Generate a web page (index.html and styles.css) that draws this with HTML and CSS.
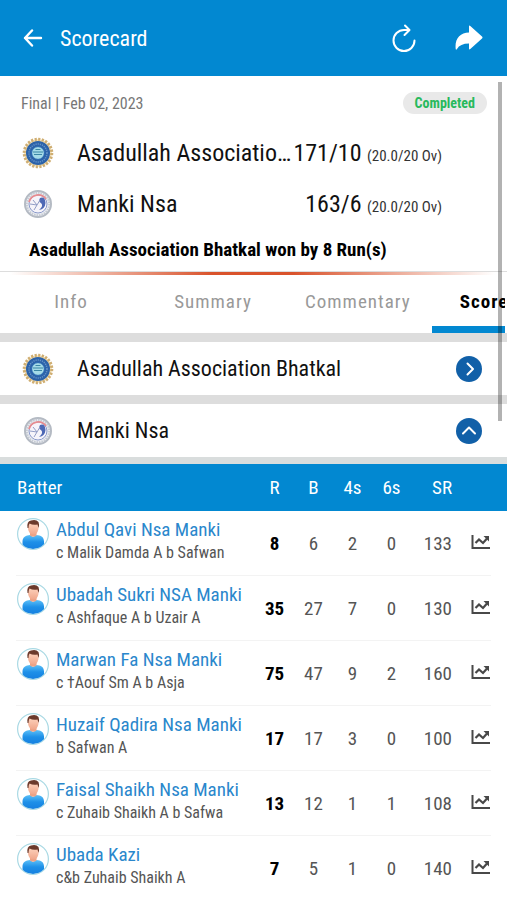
FILE: index.html
```
<!DOCTYPE html>
<html lang="en">

<head>
  <meta charset="utf-8">
  <meta name="viewport" content="width=device-width, initial-scale=1">
  <title>Scorecard</title>
  <link rel="stylesheet" href="styles.css">
</head>

<body>

  <!-- shared icons -->
  <svg class="sprite" aria-hidden="true">
    <defs>
      <linearGradient id="shirt" x1="0" y1="0" x2="0" y2="1">
        <stop offset="0" stop-color="#5cc0f8"></stop>
        <stop offset="0.5" stop-color="#1e90e8"></stop>
        <stop offset="1" stop-color="#1580e0"></stop>
      </linearGradient>
      <linearGradient id="skin" x1="0" y1="0" x2="0" y2="1">
        <stop offset="0" stop-color="#ffd9c4"></stop>
        <stop offset="1" stop-color="#f0a68a"></stop>
      </linearGradient>
      <clipPath id="round"><circle cx="16" cy="16" r="15"></circle></clipPath>
    </defs>
    <symbol id="player" viewBox="0 0 32 32">
      <circle cx="16" cy="16" r="15.400" fill="#fff" stroke="#a9d9e4" stroke-width="1.200"></circle>
      <g clip-path="url(#round)">
        <path d="M5.500 29V23.500C5.500 19 9 17.500 13 17L16 19L19.500 17C24 17.500 27 19 27 23.500V29Q16 33 5.500 29Z" fill="url(#shirt)"></path>
        <path d="M13 14H19.500V17.500Q16 20 13 17.500Z" fill="#eba285"></path>
        <path d="M11 7Q11 3 16.500 3Q21.500 3 21.500 7V11Q20.500 16.500 16.500 16.500Q12 16.500 11 11Z" fill="url(#skin)"></path>
        <path d="M10.500 10Q9.500 3 14 2.500Q19 1 21.500 4Q22.500 6 21.500 10L20.500 6.500Q16 7.500 12.500 5.500Q11.500 7 11.500 10Z" fill="#6b3a2c"></path>
      </g>
    </symbol>
    <symbol id="graph" viewBox="0 0 20 16">
      <path d="M1.500 1V14H19" fill="none" stroke="#484848" stroke-width="2"></path>
      <path d="M4.500 9L8 5.500L12 9L16 4.500" fill="none" stroke="#484848" stroke-width="2.200"></path>
      <path d="M12.500 2H18V7.500Z" fill="#484848"></path>
    </symbol>
    <symbol id="logo-asadullah" viewBox="0 0 32 32">
      <circle cx="16" cy="16" r="13.800" fill="#f2dfb4" stroke="#cfae72" stroke-width="3" stroke-dasharray="2.200 1.400"></circle>
      <circle cx="16" cy="16" r="12" fill="#2c62a8"></circle>
      <circle cx="16" cy="16" r="9" fill="none" stroke="#6695cb" stroke-width="1.500" stroke-dasharray="1.200 1"></circle>
      <circle cx="16" cy="16" r="6.400" fill="#a5dbe8" stroke="#2666b0"></circle>
      <path d="M11 15H21M12 17.500H20M13.500 12.500H18.500" stroke="#3b87a5"></path>
    </symbol>
    <symbol id="logo-manki" viewBox="0 0 32 32">
      <circle cx="16" cy="16" r="13" fill="#eceef2" stroke="#b4bac3" stroke-width="2"></circle>
      <circle cx="16" cy="16" r="11.200" fill="none" stroke="#c5cad3" stroke-width="2" stroke-dasharray="1.500 1"></circle>
      <circle cx="16" cy="16" r="9" fill="#f6f4fa" stroke="#8998ca"></circle>
      <path d="M7 14A9.500 9.500 0 0 1 24 11" fill="none" stroke="#e78c90" stroke-width="1.800"></path>
      <path d="M18 10Q23 8 23.500 15Q23 21 17 22Q22 18 19 15Q16 14 18 10Z" fill="#4d68b5"></path>
      <path d="M8 16L15 17L11 12M15 17L12 22M15 17L18 12" fill="none" stroke="#929dc6"></path>
    </symbol>
  </svg>

  <header class="topbar">
    <button class="icon-btn" type="button" aria-label="Back">
      <svg width="20" height="18" viewBox="0 0 20 18" fill="none" stroke="#fff" stroke-width="2.400" stroke-linecap="round" stroke-linejoin="round">
        <path d="M18 9H2M9 1.500L2 9L9 16.500"></path>
      </svg>
    </button>
    <h1>Scorecard</h1>
    <button class="icon-btn" type="button" aria-label="Refresh">
      <svg width="24" height="28" viewBox="0 0 24 28" fill="none" stroke="#fff" stroke-width="2" stroke-linecap="round" stroke-linejoin="round">
        <path d="M22.500 16.500A10.500 10.500 0 1 1 12 6H16.500M13 1.500L17.500 6L12.500 11"></path>
      </svg>
    </button>
    <button class="icon-btn share" type="button" aria-label="Share">
      <svg width="28" height="26" viewBox="0 0 28 26" fill="#fff">
        <path d="M14 1.500Q14 0 15.300 1L27 11.500Q28 12.500 27 13.500L15.300 24Q14 25 14 23.500V18.500Q5 18.500 2 24Q1 25.500 .7 24C-.5 14 5 7.500 14 7.500Z"></path>
      </svg>
    </button>
  </header>

  <section class="match">
    <div class="match-info">
      <span>Final | Feb 02, 2023</span>
      <span class="badge">Completed</span>
    </div>
    <div class="team">
      <svg class="logo"><use href="#logo-asadullah"></use></svg>
      <span class="team-name">Asadullah Association Bhatkal</span>
      <span class="score">171/10 <small>(20.0/20 Ov)</small></span>
    </div>
    <div class="team">
      <svg class="logo"><use href="#logo-manki"></use></svg>
      <span class="team-name">Manki Nsa</span>
      <span class="score">163/6 <small>(20.0/20 Ov)</small></span>
    </div>
    <p class="result">Asadullah Association Bhatkal won by 8 Run(s)</p>
  </section>

  <nav class="tabs">
    <a href="#info">Info</a>
    <a href="#summary">Summary</a>
    <a href="#commentary">Commentary</a>
    <a href="#scorecard" class="active">Scorecard</a>
  </nav>

  <main id="scorecard">
    <button class="innings" type="button" aria-expanded="false">
      <svg class="logo"><use href="#logo-asadullah"></use></svg>
      <span>Asadullah Association Bhatkal</span>
      <svg class="toggle" viewBox="0 0 26 26"><circle cx="13" cy="13" r="13"></circle><path d="M11.500 7.500L17 13L11.500 18.500"></path></svg>
    </button>
    <button class="innings" type="button" aria-expanded="true">
      <svg class="logo"><use href="#logo-manki"></use></svg>
      <span>Manki Nsa</span>
      <svg class="toggle" viewBox="0 0 26 26"><circle cx="13" cy="13" r="13"></circle><path d="M7 15.500L13 9.500L19 15.500"></path></svg>
    </button>

    <table class="batting">
      <thead>
        <tr>
          <th>Batter</th>
          <th class="num">R</th>
          <th class="num">B</th>
          <th class="num">4s</th>
          <th class="num">6s</th>
          <th class="num sr">SR</th>
          <th class="chart"></th>
        </tr>
      </thead>
      <tbody>
        <tr>
          <td><div class="batter"><svg class="avatar"><use href="#player"></use></svg><div><a href="#">Abdul Qavi Nsa Manki</a><p>c Malik Damda A b Safwan</p></div></div></td>
          <td class="num runs">8</td>
          <td class="num">6</td>
          <td class="num">2</td>
          <td class="num">0</td>
          <td class="num sr">133</td>
          <td class="chart"><button type="button" aria-label="Graph"><svg><use href="#graph"></use></svg></button></td>
        </tr>
        <tr>
          <td><div class="batter"><svg class="avatar"><use href="#player"></use></svg><div><a href="#">Ubadah Sukri NSA Manki</a><p>c Ashfaque A b Uzair A</p></div></div></td>
          <td class="num runs">35</td>
          <td class="num">27</td>
          <td class="num">7</td>
          <td class="num">0</td>
          <td class="num sr">130</td>
          <td class="chart"><button type="button" aria-label="Graph"><svg><use href="#graph"></use></svg></button></td>
        </tr>
        <tr>
          <td><div class="batter"><svg class="avatar"><use href="#player"></use></svg><div><a href="#">Marwan Fa Nsa Manki</a><p>c †Aouf Sm A b Asja</p></div></div></td>
          <td class="num runs">75</td>
          <td class="num">47</td>
          <td class="num">9</td>
          <td class="num">2</td>
          <td class="num sr">160</td>
          <td class="chart"><button type="button" aria-label="Graph"><svg><use href="#graph"></use></svg></button></td>
        </tr>
        <tr>
          <td><div class="batter"><svg class="avatar"><use href="#player"></use></svg><div><a href="#">Huzaif Qadira Nsa Manki</a><p>b Safwan A</p></div></div></td>
          <td class="num runs">17</td>
          <td class="num">17</td>
          <td class="num">3</td>
          <td class="num">0</td>
          <td class="num sr">100</td>
          <td class="chart"><button type="button" aria-label="Graph"><svg><use href="#graph"></use></svg></button></td>
        </tr>
        <tr>
          <td><div class="batter"><svg class="avatar"><use href="#player"></use></svg><div><a href="#">Faisal Shaikh Nsa Manki</a><p>c Zuhaib Shaikh A b Safwa</p></div></div></td>
          <td class="num runs">13</td>
          <td class="num">12</td>
          <td class="num">1</td>
          <td class="num">1</td>
          <td class="num sr">108</td>
          <td class="chart"><button type="button" aria-label="Graph"><svg><use href="#graph"></use></svg></button></td>
        </tr>
        <tr>
          <td><div class="batter"><svg class="avatar"><use href="#player"></use></svg><div><a href="#">Ubada Kazi</a><p>c&amp;b Zuhaib Shaikh A</p></div></div></td>
          <td class="num runs">7</td>
          <td class="num">5</td>
          <td class="num">1</td>
          <td class="num">0</td>
          <td class="num sr">140</td>
          <td class="chart"><button type="button" aria-label="Graph"><svg><use href="#graph"></use></svg></button></td>
        </tr>
      </tbody>
    </table>
  </main>

  <div class="scroll-thumb"></div>

</body>

</html>
```
FILE: styles.css
```
* {
  box-sizing: border-box;
}

html {
  scrollbar-width: none;
}

body {
  margin: 0;
  background: #fff;
  color: #111;
  font-family: "Roboto Condensed", Roboto, sans-serif;
  font-size: 19px;
}

h1,
p {
  margin: 0;
}

button {
  padding: 0;
  border: 0;
  background: none;
  color: inherit;
  font: inherit;
  cursor: pointer;
}

a {
  text-decoration: none;
}

svg {
  display: block;
}

.sprite {
  position: absolute;
  width: 0;
  height: 0;
}

/* top bar */
.topbar {
  display: flex;
  align-items: center;
  height: 76px;
  padding: 0 24px 0 23px;
  background: #0288d1;
  color: #fff;
}

.topbar h1 {
  flex: 1;
  margin-left: 17px;
  font-size: 22px;
  font-weight: 400;
}

.share {
  margin-left: 39px;
}

/* match summary */
.match {
  padding: 13px 20px 0;
  border-bottom: 1px solid #ddd;
}

.match-info {
  display: flex;
  align-items: center;
  justify-content: space-between;
  height: 28px;
  padding-left: 1px;
  color: #777;
  font-size: 16px;
}

.badge {
  padding: 0 12px;
  border-radius: 11px;
  background: #e9e9e9;
  color: #27b95c;
  font-size: 14px;
  font-weight: 700;
  line-height: 22px;
}

.team {
  display: flex;
  align-items: center;
  height: 51px;
  padding: 0 45px 0 2px;
  font-size: 24px;
}

.match-info + .team {
  margin-top: 10px;
}

.logo {
  flex: none;
  width: 32px;
  height: 32px;
}

.team-name {
  flex: 1;
  min-width: 0;
  margin-left: 23px;
  overflow: hidden;
  text-overflow: ellipsis;
  white-space: nowrap;
}

.score {
  white-space: nowrap;
}

.score small {
  color: #333;
  font-size: 15px;
}

.result {
  padding-left: 9px;
  color: #000;
  font-weight: 700;
  line-height: 42px;
}

/* tabs */
.tabs {
  display: flex;
  overflow: hidden;
  height: 61px;
  margin-right: 2px;
  background: linear-gradient(to right, transparent 2%, #d9532c 42%, #d9532c 58%, transparent 98%) top / 100% 3px no-repeat;
}

.tabs a {
  flex: none;
  min-width: 142px;
  padding: 0 21px;
  border-bottom: 7px solid transparent;
  color: #999;
  letter-spacing: 1px;
  line-height: 60px;
  text-align: center;
}

.tabs .active {
  border-color: #0288d1;
  color: #000;
  font-weight: 700;
}

/* innings */
.innings {
  display: flex;
  align-items: center;
  width: 100%;
  height: 62px;
  padding: 0 25px 0 22px;
  border-top: 9px solid #ddd;
  font-size: 22px;
}

.innings span {
  flex: 1;
  margin-left: 23px;
  text-align: left;
}

.toggle {
  width: 26px;
  height: 26px;
  fill: #1160a8;
}

.toggle path {
  fill: none;
  stroke: #fff;
  stroke-width: 2;
  stroke-linecap: round;
  stroke-linejoin: round;
}

/* batting table */
.batting {
  width: 100%;
  border-top: 7px solid #d9dddd;
  border-spacing: 0;
  table-layout: fixed;
}

.batting th {
  height: 47px;
  padding: 0 0 0 17px;
  background: #0288d1;
  color: #fff;
  font-weight: 400;
  text-align: left;
}

.batting td {
  height: 65px;
  padding: 0 0 0 17px;
}

.batting tbody tr {
  background: linear-gradient(#f3f3f3, #f3f3f3) bottom / calc(100% - 32px) 1px no-repeat;
}

.batting .num {
  width: 39px;
  padding: 0;
  text-align: center;
}

.batting td.num {
  color: #555;
}

.batting td.runs {
  color: #000;
  font-weight: 700;
}

.batting .sr {
  width: 41px;
  text-align: right;
}

.batting .chart {
  width: 55px;
  padding: 0 0 0 19px;
}

.chart svg {
  width: 20px;
  height: 16px;
}

.batter {
  display: flex;
  gap: 7px;
  height: 65px;
  padding-top: 7px;
  white-space: nowrap;
}

.batter a {
  display: block;
  color: #2a87cc;
  line-height: 24px;
}

.batter p {
  color: #555;
  font-size: 16px;
  line-height: 22px;
}

.avatar {
  flex: none;
  width: 32px;
  height: 32px;
}

/* overlay scroll indicator */
.scroll-thumb {
  position: absolute;
  top: 82px;
  right: 5px;
  width: 4px;
  height: 339px;
  background: rgba(0, 0, 0, .3);
}
```
